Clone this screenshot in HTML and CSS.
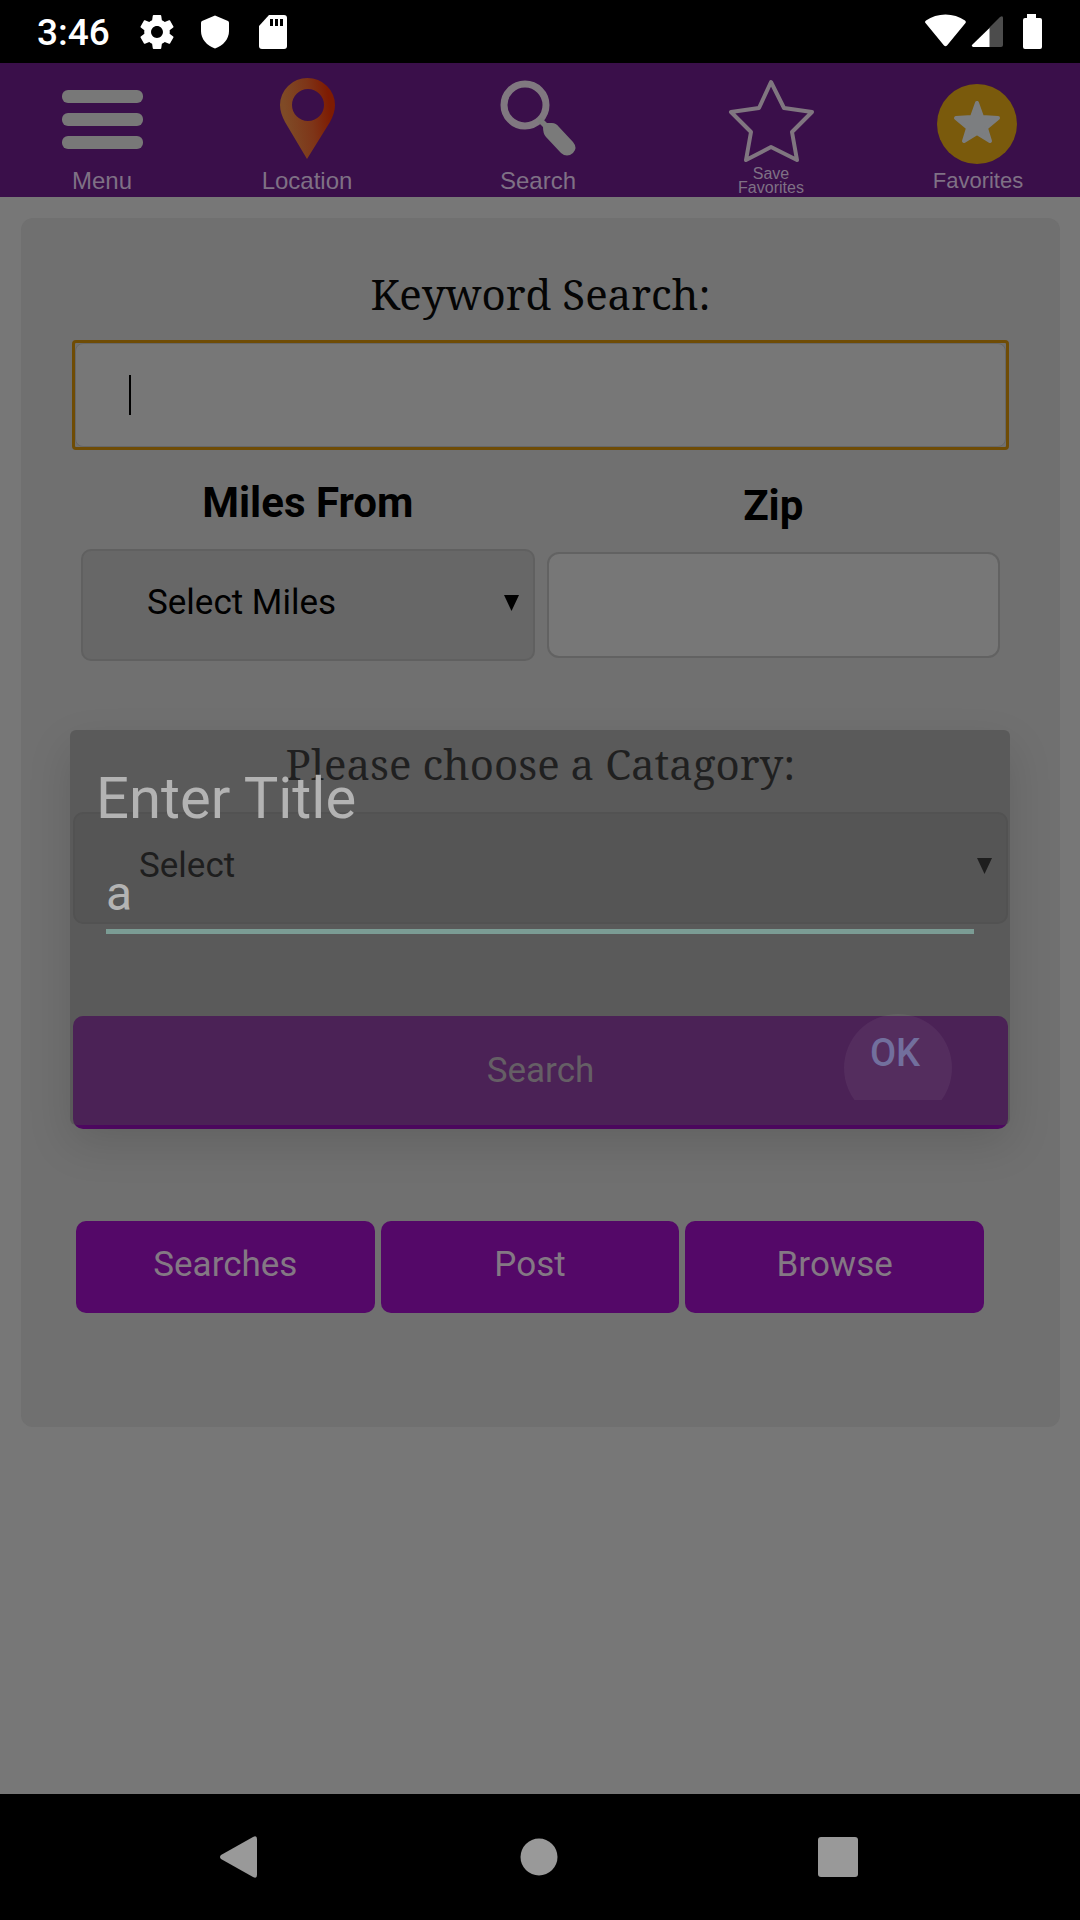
FILE: index.html
```html
<!DOCTYPE html>
<html lang="en">
<head>
<meta charset="utf-8">
<meta name="viewport" content="width=device-width, initial-scale=1">
<title>Keyword Search</title>
<link rel="stylesheet" href="styles.css">
</head>
<body>
<div class="device">
  <div class="status">
    <span class="clock">3:46</span>
    <svg class="gear" width="34" height="34" viewBox="2 2 20 20" aria-hidden="true"><path fill="#fff" d="M19.43 12.98c.04-.32.07-.64.07-.98s-.03-.66-.07-.98l2.11-1.65c.19-.15.24-.42.12-.64l-2-3.46c-.12-.22-.39-.3-.61-.22l-2.49 1c-.52-.4-1.08-.73-1.69-.98l-.38-2.65C14.46 2.18 14.25 2 14 2h-4c-.25 0-.46.18-.49.42l-.38 2.65c-.61.25-1.17.59-1.69.98l-2.49-1c-.23-.09-.49 0-.61.22l-2 3.46c-.13.22-.07.49.12.64l2.11 1.65c-.04.32-.07.65-.07.98s.03.66.07.98l-2.11 1.65c-.19.15-.24.42-.12.64l2 3.46c.12.22.39.3.61.22l2.49-1c.52.4 1.08.73 1.69.98l.38 2.65c.03.24.24.42.49.42h4c.25 0 .46-.18.49-.42l.38-2.65c.61-.25 1.17-.59 1.69-.98l2.49 1c.23.09.49 0 .61-.22l2-3.46c.12-.22.07-.49-.12-.64l-2.11-1.65zM12 15.5c-1.93 0-3.5-1.57-3.5-3.5s1.57-3.5 3.5-3.5 3.500 1.570 3.500 3.500-1.570 3.500-3.500 3.500z"/></svg>
    <svg class="shield" width="28" height="34" viewBox="0 0 28 34" aria-hidden="true"><path fill="#fff" d="M14 0.500 L27 6 Q28 6.500 28 8 V16 C28 24 22 31 14 33.500 C6 31 0 24 0 16 V8 Q0 6.500 1 6Z"/></svg>
    <svg class="sd" width="28" height="34" viewBox="0 0 28 34" aria-hidden="true"><path fill="#fff" d="M10 0 H25 Q28 0 28 3 V31 Q28 34 25 34 H3 Q0 34 0 31 V11Z"/><path d="M11 4h3v7h-3zM16 4h3v7h-3zM21 4h3v7h-3z"/></svg>
    <svg class="radio" width="118" height="36" viewBox="0 0 118 36" aria-hidden="true">
      <path fill="#fff" d="M0.500 9 C-0.500 8 0 7.500 1 6.500 C12 -1.500 29 -1.500 40 6.500 C41 7.500 41 8 40.500 9 L22 31.500 Q20.500 33 19 31.500Z"/>
      <path fill="#4c4c4c" d="M64 14 L75 3 Q78 1 78 4 V31 Q78 33 76 33 H64Z"/>
      <path fill="#fff" d="M64.500 14 V33 H48 Q46 32 47 31Z"/>
      <path fill="#fff" d="M102 0 H111 V4 H115 Q117 4 117 6 V33 Q117 35 115 35 H100 Q98 35 98 33 V6 Q98 4 100 4 H102Z"/>
    </svg>
  </div>

  <main class="screen">
    <nav class="toolbar">
      <a class="tool" href="#menu">
        <svg width="96" height="104" viewBox="0 0 96 104" aria-hidden="true"><g fill="#787878"><rect x="8" y="27" width="81" height="13" rx="6"/><rect x="8" y="50" width="81" height="13" rx="6"/><rect x="8" y="73" width="81" height="13" rx="6"/></g></svg>
        <span>Menu</span>
      </a>
      <a class="tool" href="#location">
        <svg width="96" height="104" viewBox="0 0 96 104" aria-hidden="true"><defs><linearGradient id="pin" x1="0" y1="0.500" x2="1" y2="0.300"><stop offset="0.100" stop-color="#7f4a26"/><stop offset="0.550" stop-color="#7e3518"/><stop offset="0.900" stop-color="#7e1b02"/></linearGradient></defs><path fill="url(#pin)" fill-rule="evenodd" d="M48 96 L26 59 C23 53 21 48 21 42 A27.500 27 0 0 1 76 42 C76 48 74 53 71 59Z M65 42 A16 16 0 1 0 33 42 A16 16 0 1 0 65 42Z"/></svg>
        <span>Location</span>
      </a>
      <a class="tool" href="#search">
        <svg width="96" height="104" viewBox="0 0 96 104" aria-hidden="true"><circle cx="35" cy="42" r="21" fill="none" stroke="#807880" stroke-width="7"/><path fill="#7a7a7a" d="M47 58 L51 54 L57 60 H62 Q66 60 69 64 L83 79 Q88 85 83 90 Q77 95 71 90 L56 74 Q53 71 53 64Z"/></svg>
        <span>Search</span>
      </a>
      <a class="tool" href="#save">
        <svg width="96" height="104" viewBox="0 0 96 104" aria-hidden="true"><path fill="none" stroke="#807680" stroke-width="4" stroke-linejoin="round" d="M48 19 L61 45 L89 49 L69 69 L74 97 L48 84 L23 97 L28 69 L8 49 L36 45Z"/></svg>
        <span class="small">Save<br>Favorites</span>
      </a>
      <a class="tool" href="#favorites">
        <svg width="96" height="104" viewBox="0 0 96 104" aria-hidden="true"><circle cx="47" cy="61" r="40" fill="#7a5a0c"/><path fill="#7c7e80" stroke="#7c7e80" stroke-width="4" stroke-linejoin="round" d="M47 40 L52 54 L68 55 L56 65 L60 78 L47 70 L34 78 L38 65 L26 55 L42 54Z"/></svg>
        <span class="mid">Favorites</span>
      </a>
    </nav>

    <form class="card">
      <label class="heading" for="keyword">Keyword Search:</label>
      <div class="focus">
        <input class="field" id="keyword" type="text">
        <span class="caret"></span>
      </div>
      <div class="pair">
        <div class="col">
          <label class="label" for="miles">Miles From</label>
          <div class="drop">
            <select class="select" id="miles"><option>Select Miles</option></select>
            <svg width="15" height="16" viewBox="0 0 15 16" aria-hidden="true"><path d="M0 0H15L7.500 16Z"/></svg>
          </div>
        </div>
        <div class="col">
          <label class="label" for="zip">Zip</label>
          <input class="field zip" id="zip" type="text">
        </div>
      </div>
      <label class="heading category" for="category">Please choose a Catagory:</label>
      <div class="drop wide">
        <select class="select" id="category"><option>Select</option></select>
        <svg width="15" height="16" viewBox="0 0 15 16" aria-hidden="true"><path d="M0 0H15L7.500 16Z"/></svg>
      </div>
      <button class="btn submit" type="button">Search</button>
      <div class="actions">
        <button class="btn" type="button">Searches</button>
        <button class="btn" type="button">Post</button>
        <button class="btn" type="button">Browse</button>
      </div>
    </form>

    <div class="overlay">
      <div class="dialog" role="dialog" aria-labelledby="dialog-title">
        <label class="title" id="dialog-title" for="title">Enter Title</label>
        <input class="entry" id="title" type="text" value="a">
        <button class="ok" type="button"><span class="ripple"></span>OK</button>
      </div>
    </div>
  </main>

  <nav class="system">
    <button type="button" aria-label="Back"><svg width="38" height="42" viewBox="0 0 38 42"><path fill="#999" d="M1 19 L33 1 Q37 -1 37 3 V39 Q37 43 33 41 L1 23 Q-1 21 1 19Z"/></svg></button>
    <button type="button" aria-label="Home"><svg width="38" height="38" viewBox="0 0 38 38"><circle cx="19" cy="19" r="18.500" fill="#999"/></svg></button>
    <button type="button" aria-label="Recent apps"><svg width="40" height="40" viewBox="0 0 40 40"><rect width="40" height="40" rx="3" fill="#999"/></svg></button>
  </nav>
</div>
</body>
</html>
```
FILE: styles.css
```css
* {
  box-sizing: border-box;
}

body {
  margin: 0;
  background: #777;
  font-family: Roboto, "Liberation Sans", sans-serif;
}

input,
select,
button {
  margin: 0;
  font-family: inherit;
  appearance: none;
}

svg {
  display: block;
  flex: none;
}

.device {
  display: flex;
  flex-direction: column;
  min-height: 100vh;
}

/* Status bar */
.status {
  display: flex;
  align-items: center;
  height: 63px;
  padding: 0 37px;
  background: #000;
  color: #fff;
}

.clock {
  width: 103px;
  font-size: 37px;
  font-weight: 500;
  line-height: 44px;
  padding-top: 3px;
}

.shield {
  margin-left: 27px;
}

.sd {
  margin-left: 30px;
}

.radio {
  margin-left: auto;
}

/* App */
.screen {
  position: relative;
  flex: 1;
}

.toolbar {
  display: grid;
  grid-template-columns: 204fr 206fr 256fr 210fr 204fr;
  padding-bottom: 2px;
  background: #3a0f4a;
}

.tool {
  display: flex;
  flex-direction: column;
  align-items: center;
  color: #7f7185;
  font-family: "Liberation Sans", Arial, sans-serif;
  font-size: 24px;
  line-height: 28px;
  text-align: center;
  text-decoration: none;
}

.mid {
  font-size: 22px;
}

.small {
  font-size: 16px;
  line-height: 14px;
}

.card {
  margin: 21px 20px 0 21px;
  padding: 46px 51px 114px;
  border-radius: 12px;
  background: #707070;
}

.heading {
  display: block;
  color: #050505;
  font-family: "Noto Serif", "Liberation Serif", serif;
  font-size: 42px;
  line-height: 60px;
  text-align: center;
}

.focus {
  position: relative;
  margin-top: 16px;
  border: 3px solid #6f4c05;
  border-radius: 4px;
  background: #707070;
}

.field {
  display: block;
  width: 100%;
  height: 104px;
  padding: 0 54px;
  border: 1px solid #676767;
  border-radius: 8px;
  outline: none;
  background: #777;
  font-size: 35px;
}

.caret {
  position: absolute;
  left: 54px;
  top: 32px;
  width: 2px;
  height: 40px;
  background: #000;
}

.pair {
  display: grid;
  grid-template-columns: 1fr 1fr;
  align-items: center;
  gap: 12px;
  margin: 28px 9px 0;
}

.label {
  display: block;
  margin-bottom: 21px;
  color: #000;
  font-size: 42px;
  font-weight: 700;
  line-height: 50px;
  text-align: center;
}

.zip {
  height: 106px;
  border: 2px solid #626262;
  border-radius: 12px;
}

.drop {
  display: grid;
  align-items: center;
}

.drop > * {
  grid-area: 1 / 1;
}

.drop svg {
  justify-self: end;
  margin: 0 16px 4px 0;
}

.select {
  width: 100%;
  height: 112px;
  padding: 0 64px 6px;
  border: 2px solid #606060;
  border-radius: 10px;
  background: #676767;
  color: #000;
  font-size: 35px;
}

.category {
  margin-top: 73px;
}

.wide {
  margin: 18px 1px 0;
}

.btn {
  flex: 1;
  height: 92px;
  padding: 0 0 6px;
  border: 0;
  border-radius: 10px;
  background: #540868;
  color: #847884;
  font-size: 35px;
}

.submit {
  display: block;
  width: calc(100% - 2px);
  height: 113px;
  margin: 92px 1px;
  padding-bottom: 4px;
}

.actions {
  display: flex;
  gap: 6px;
  margin: 0 25px 0 4px;
}

/* Fading dialog over the form */
.overlay {
  position: absolute;
  inset: 0;
  display: flex;
  align-items: center;
  padding: 0 70px 2px;
}

.dialog {
  display: flex;
  flex: 1;
  flex-direction: column;
  padding: 34px 26px 25px;
  border-radius: 6px;
  background: rgba(65, 65, 65, 0.46);
  box-shadow: 0 18px 44px rgba(0, 0, 0, 0.13);
}

.title {
  color: #b3b3b3;
  font-size: 58px;
  line-height: 68px;
}

.entry {
  height: 71px;
  margin: 31px 10px 72px;
  padding: 0 0 6px;
  border: 0;
  border-bottom: 5px solid #7b9c94;
  outline: none;
  background: none;
  color: #b3b3b3;
  font-size: 48px;
  line-height: 60px;
}

.ok {
  position: relative;
  align-self: flex-end;
  width: 178px;
  height: 94px;
  padding: 0;
  overflow: hidden;
  border: 0;
  background: none;
  color: #6b6898;
  font-size: 38px;
  font-weight: 500;
}

.ripple {
  position: absolute;
  left: 38px;
  top: 8px;
  width: 108px;
  height: 108px;
  border-radius: 50%;
  background: rgba(255, 255, 255, 0.05);
}

/* System navigation */
.system {
  display: grid;
  grid-template-columns: 389fr 299fr 300fr;
  align-items: center;
  height: 126px;
  padding-right: 92px;
  background: #000;
}

.system button {
  display: flex;
  justify-content: center;
  padding: 0;
  border: 0;
  background: none;
}

.system button:first-child {
  padding-left: 88px;
}
```
